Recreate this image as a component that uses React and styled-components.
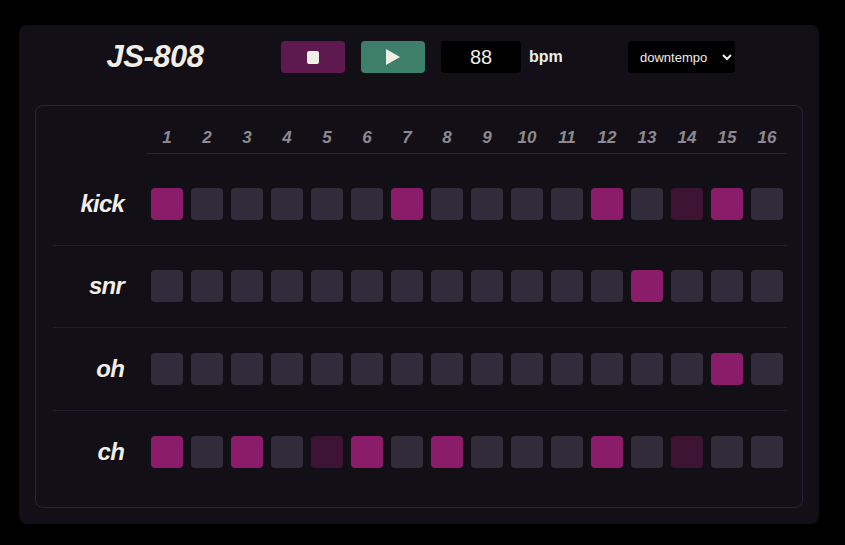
import styled, { createGlobalStyle } from "styled-components";

const patterns = {
    kick: "x.....x....x.dx.",
    snr: "............x...",
    oh: "..............x.",
    ch: "x.x.dx.x...x.d..",
};

export default function App() {
    return (
        <>
            <GlobalStyle />
            <Machine>
                <Header>
                    <Title>JS-808</Title>
                    <Transport $color="#5e1a4f" aria-label="stop">
                        <StopIcon />
                    </Transport>
                    <Transport $color="#3d7f69" aria-label="play">
                        <svg width="16" height="18" viewBox="0 0 16 18">
                            <path d="M1 1 L15 9 L1 17 Z" fill="#f0eee6" />
                        </svg>
                    </Transport>
                    <Bpm type="number" defaultValue={88} />
                    <BpmLabel>bpm</BpmLabel>
                    <Preset defaultValue="downtempo">
                        <option value="downtempo">downtempo</option>
                        <option value="house">house</option>
                        <option value="hiphop">hiphop</option>
                    </Preset>
                </Header>

                <Panel>
                    <StepNumbers>
                        {Array.from({ length: 16 }, (_, i) => (
                            <StepNumber key={i}>{i + 1}</StepNumber>
                        ))}
                    </StepNumbers>
                    {Object.entries(patterns).map(([name, steps]) => (
                        <Track key={name}>
                            <TrackName>{name}</TrackName>
                            {steps.split("").map((s, i) => (
                                <Slot key={i}>
                                    <Pad $state={s} />
                                </Slot>
                            ))}
                        </Track>
                    ))}
                </Panel>
            </Machine>
        </>
    );
}

const GlobalStyle = createGlobalStyle`
    body {
        margin: 0;
        background: #000;
        font-family: "Liberation Sans", Arial, sans-serif;
    }
`;

const Machine = styled.div`
    margin: 25px 0 0 19px;
    width: 800px;
    height: 499px;
    box-sizing: border-box;
    background: #121016;
    border-radius: 8px;
    padding: 16px 16px 16px 16px;
`;

const Header = styled.div`
    display: flex;
    align-items: center;
    height: 32px;
`;

const Title = styled.h1`
    margin: 0 6px 0 0;
    width: 240px;
    text-align: center;
    font-size: 31px;
    font-weight: 700;
    font-style: italic;
    letter-spacing: -0.5px;
    color: #f0eee6;
    text-shadow: 1px 1px 1px rgba(0, 0, 0, 0.6);
`;

const Transport = styled.button`
    display: flex;
    align-items: center;
    justify-content: center;
    width: 64px;
    height: 32px;
    margin-right: 16px;
    border: none;
    border-radius: 4px;
    background: ${(p) => p.$color};
    cursor: pointer;
    padding: 0;
`;

const StopIcon = styled.span`
    width: 12px;
    height: 13px;
    border-radius: 2px;
    background: #f0eee6;
`;

const Bpm = styled.input`
    width: 80px;
    height: 32px;
    box-sizing: border-box;
    border: none;
    border-radius: 4px;
    background: #000;
    color: #f0eee6;
    font-family: "Liberation Sans", Arial, sans-serif;
    font-size: 20px;
    text-align: center;
    outline: none;
    -moz-appearance: textfield;

    &::-webkit-inner-spin-button,
    &::-webkit-outer-spin-button {
        -webkit-appearance: none;
        margin: 0;
    }
`;

const BpmLabel = styled.span`
    margin-left: 8px;
    width: 40px;
    font-size: 16px;
    font-weight: 700;
    color: #f0eee6;
`;

const Preset = styled.select`
    margin-left: 59px;
    width: 107px;
    height: 32px;
    border: none;
    border-radius: 4px;
    background: #000;
    color: #f0eee6;
    font-family: "Liberation Sans", Arial, sans-serif;
    font-size: 13px;
    padding: 0 4px 0 8px;
    outline: none;
    color-scheme: dark;
`;

const Panel = styled.div`
    margin-top: 32px;
    height: 403px;
    box-sizing: border-box;
    border: 1px solid #2a2040;
    border-radius: 8px;
    padding: 17px 15px 0 17px;
`;

const StepNumbers = styled.div`
    display: grid;
    grid-template-columns: repeat(16, 40px);
    margin-left: 94px;
    height: 30px;
    border-bottom: 1px solid #2c2240;
    margin-bottom: 9px;
`;

const StepNumber = styled.span`
    text-align: center;
    font-size: 17px;
    font-weight: 700;
    font-style: italic;
    color: #8c8a90;
    line-height: 30px;
`;

const Track = styled.div`
    display: grid;
    grid-template-columns: 94px repeat(16, 40px);
    align-items: center;
    height: 82.5px;
    box-sizing: border-box;
    border-bottom: 1px solid #231c30;

    &:last-child {
        border-bottom: none;
    }
`;

const TrackName = styled.span`
    text-align: right;
    padding-right: 23px;
    font-size: 24px;
    font-weight: 700;
    font-style: italic;
    letter-spacing: -0.8px;
    color: #f0eee6;
    text-shadow: 1px 1px 1px rgba(0, 0, 0, 0.6);
`;

const Slot = styled.div`
    display: flex;
    justify-content: center;
`;

const padColors = {
    x: "#8a1c69",
    d: "#3d1434",
    ".": "#302c3b",
};

const Pad = styled.div`
    width: 32px;
    height: 32px;
    border-radius: 4px;
    background: ${(p) => padColors[p.$state]};
    cursor: pointer;
`;
